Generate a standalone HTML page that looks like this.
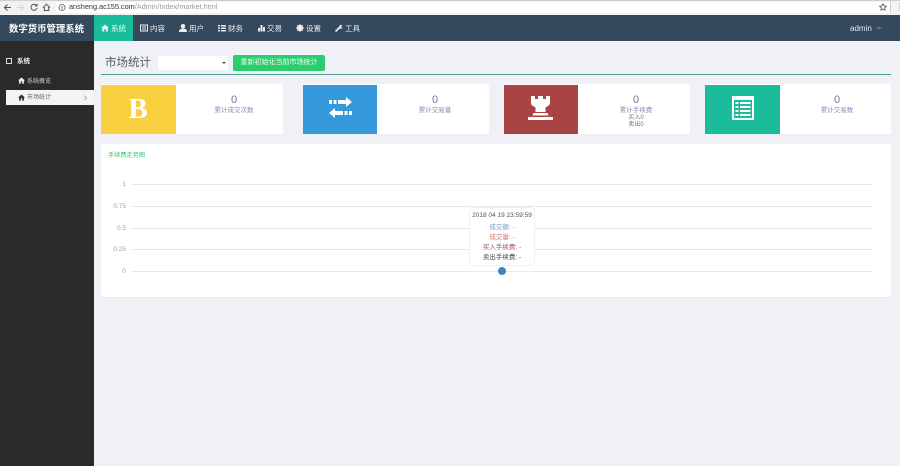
<!DOCTYPE html>
<html lang="zh-CN"><head><meta charset="utf-8"><title>市场统计</title>
<style>
*{box-sizing:border-box}
html,body{margin:0;padding:0;width:900px;height:466px;overflow:hidden;background:#eff1f6;font-family:"Liberation Sans","Noto Sans CJK SC",sans-serif}
body{filter:blur(.3px)}
.a{position:absolute;white-space:nowrap}
.bar{left:0;top:0;width:900px;height:15px;background:#f2f2f2;border-top:1px solid #cfcfcf}
.url{left:56px;top:2px;width:834px;height:11px;background:#fff}
.nav{left:0;top:15px;width:900px;height:26px;background:#35495d}
.side{left:0;top:41px;width:94px;height:425px;background:#2a2a2a}
.nt{top:15px;height:26px;line-height:27px;color:#fff;font-size:7.5px;opacity:.9}
.nt svg{vertical-align:-1px;margin-right:2px}
.card{top:84px;height:50px;background:#fff;border-radius:2px}
.ic{top:85px;height:49px}
.num{top:94px;width:110px;text-align:center;font-size:11px;color:#77779f;line-height:12px}
.lab{top:106px;width:110px;text-align:center;font-size:6.5px;color:#8a8ab8;line-height:10px}
.grid{left:131px;width:741px;height:1px;background:#e8e9ed}
.yl{left:100px;width:26px;text-align:right;font-size:6.5px;color:#a0a0a0;line-height:8px;margin-top:1px}
.tt{left:469px;width:66px;text-align:center;font-size:6.5px;line-height:8px}
</style></head><body>

<div class="a bar"></div>
<div class="a url"></div>
<svg class="a" style="left:0;top:0" width="68" height="15" viewBox="0 0 68 15">
<path d="M11 7.500H4.500M7.500 4.500l-3 3 3 3" fill="none" stroke="#555" stroke-width="1.100"/>
<path d="M17 7.500h6.500M20.500 4.500l3 3-3 3" fill="none" stroke="#d4d4d4" stroke-width="1.100"/>
<path d="M36.500 5.500a3 3 0 1 0 .5 2.500M37 3.800v2.200h-2.200" fill="none" stroke="#555" stroke-width="1"/>
<path d="M43 7.700l3.500-3.500 3.500 3.500M44.300 7v3.500h4.400V7" fill="none" stroke="#555" stroke-width="1"/>
<circle cx="62" cy="7.500" r="3" fill="none" stroke="#555" stroke-width=".8"/><path d="M62 6v3.300" stroke="#555" stroke-width=".8"/>
</svg>
<div class="a" style="left:69px;top:1px;font-size:7.3px;line-height:12px;color:#999"><span style="color:#333">ansheng.ac155.com</span>/Admin/Index/market.html</div>
<svg class="a" style="left:879px;top:3px" width="8" height="8" viewBox="0 0 8 8"><path d="M4 .7l1 2.200 2.400.3-1.800 1.600.5 2.400L4 6 1.900 7.200l.5-2.400L.6 3.200 3 2.900z" fill="none" stroke="#555" stroke-width=".8"/></svg>
<div class="a" style="left:890px;top:1px;width:1px;height:12px;background:#ccc"></div>
<div class="a" style="left:896px;top:1px;font-size:8px;line-height:12px;color:#555">⋮</div>

<div class="a nav"></div>
<div class="a" style="left:9px;top:15px;line-height:27px;font-size:9.4px;font-weight:bold;color:#fff">数字货币管理系统</div>
<div class="a" style="left:94px;top:15px;width:39px;height:26px;background:#1abc9c"></div>

<div class="a nt" style="left:101px"><svg width="8" height="8" viewBox="0 0 8 8"><path d="M4 .5 0 4h1.200v3.500h2V5h1.600v2.500h2V4H8z" fill="#fff"/></svg>系统</div>
<div class="a nt" style="left:140px"><svg width="8" height="8" viewBox="0 0 8 8"><path d="M.5 1h7v6h-7zM2 3h4M2 5h4" fill="none" stroke="#fff"/></svg>内容</div>
<div class="a nt" style="left:179px"><svg width="8" height="8" viewBox="0 0 8 8"><circle cx="4" cy="2.200" r="2.200" fill="#fff"/><path d="M0 8c0-3 2-3.500 4-3.500S8 5 8 8z" fill="#fff"/></svg>用户</div>
<div class="a nt" style="left:218px"><svg width="8" height="8" viewBox="0 0 8 8"><path d="M0 1h2v1.500H0zM3 1h5v1.500H3zM0 3.500h2V5H0zM3 3.500h5V5H3zM0 6h2v1.500H0zM3 6h5v1.500H3z" fill="#fff"/></svg>财务</div>
<div class="a nt" style="left:258px"><svg width="7" height="8" viewBox="0 0 7 8"><path d="M0 4h2v3.500H0zM2.500 1h2v6.500h-2zM5 3h2v4.500H5z" fill="#fff"/></svg>交易</div>
<div class="a nt" style="left:296px"><svg width="8" height="8" viewBox="0 0 8 8"><circle cx="4" cy="4" r="2.200" fill="none" stroke="#fff" stroke-width="1.800"/><path d="M4 0v8M0 4h8M1.200 1.200l5.600 5.600M6.800 1.200 1.200 6.800" stroke="#fff" stroke-width="1"/></svg>设置</div>
<div class="a nt" style="left:335px"><svg width="8" height="8" viewBox="0 0 8 8"><path d="M.5 7.500 4.500 3.500" stroke="#fff" stroke-width="1.800"/><path d="M4 3.500C4 1.500 5.500.500 7.500 1L6 2.500 6.500 3.500 7.500 3.800C7 5 5 5.200 4 3.500z" fill="#fff"/></svg>工具</div>
<div class="a" style="left:850px;top:15px;line-height:27px;font-size:8px;color:#e4e8ec">admin</div>
<div class="a" style="left:876px;top:27px;border:3px solid transparent;border-top:3px solid #5f7387"></div>

<div class="a side"></div>
<div class="a" style="left:6px;top:58px;width:6px;height:6px;border:1px solid #ddd"></div>
<div class="a" style="left:17px;top:57px;font-size:6.5px;line-height:10px;color:#eee;font-weight:bold">系统</div>
<svg class="a" style="left:18px;top:77px" width="7" height="7" viewBox="0 0 8 8"><path d="M4 .5 0 4h1.200v3.500h2V5h1.600v2.500h2V4H8z" fill="#eee"/></svg>
<div class="a" style="left:27px;top:76.500px;font-size:6px;line-height:10px;color:#ccc">系统概览</div>
<div class="a" style="left:6px;top:90px;width:88px;height:15px;background:#f4f4f6"></div>
<svg class="a" style="left:18px;top:94px" width="7" height="7" viewBox="0 0 8 8"><path d="M4 .5 0 4h1.200v3.500h2V5h1.600v2.500h2V4H8z" fill="#333"/></svg>
<div class="a" style="left:27px;top:92.500px;font-size:6px;line-height:10px;color:#666">市场统计</div>
<svg class="a" style="left:83px;top:95px" width="4" height="6" viewBox="0 0 4 6"><path d="M1 .5 3.500 3 1 5.500" fill="none" stroke="#aaa" stroke-width=".8"/></svg>

<div class="a" style="left:105px;top:54px;font-size:11.500px;line-height:18px;color:#555d66">市场统计</div>
<div class="a" style="left:158px;top:56px;width:70px;height:14px;background:#fff;border-radius:2px"></div>
<div class="a" style="left:222px;top:62px;border:2px solid transparent;border-top:2.500px solid #444"></div>
<div class="a" style="left:233px;top:55px;width:92px;height:16px;background:#2ecc71;border-radius:2px;color:#e8fff0;font-size:7px;line-height:16px;text-align:center">重新初始化当前市场统计</div>
<div class="a" style="left:101px;top:74px;width:790px;height:1px;background:#4f9d8e"></div>

<div class="a card" style="left:101px;width:182px"></div>
<div class="a card" style="left:303px;width:186px"></div>
<div class="a card" style="left:504px;width:186px"></div>
<div class="a card" style="left:705px;width:186px"></div>
<div class="a ic" style="left:101px;width:75px;background:#f8d040"></div>
<div class="a ic" style="left:303px;width:74px;background:#3498db"></div>
<div class="a ic" style="left:504px;width:74px;background:#a94442"></div>
<div class="a ic" style="left:705px;width:75px;background:#1abc9c"></div>

<div class="a" style="left:126px;top:92px;width:24px;text-align:center;font-family:'Liberation Serif',serif;font-weight:bold;font-size:29px;line-height:34px;color:#fff">B</div>
<svg class="a" style="left:329px;top:97px" width="24" height="21" viewBox="0 0 24 21"><path d="M0 3h3v4H0zM4.500 3h3v4h-3zM9 3h8V0l6 5-6 5V7H9z" fill="#fff"/><path d="M23 14h-3v4h3zM18.500 14h-3v4h3zM14 14H6v-3l-6 5 6 5v-3h8z" fill="#fff"/></svg>
<svg class="a" style="left:528px;top:96px" width="25" height="24" viewBox="0 0 25 24"><path d="M3 0h4v3h3V0h5v3h3V0h4v7c0 2.500-3 3.500-4.500 4.500V16H7.500v-4.500C6 10.500 3 9.500 3 7z" fill="#fff"/><path d="M5.500 17h14l1 2.500h-16z" fill="#fff"/><rect y="21" width="25" height="3" fill="#fff"/></svg>
<svg class="a" style="left:732px;top:96px" width="22" height="24" viewBox="0 0 22 24"><rect width="22" height="24" fill="#fff"/><rect x="2" y="4" width="18" height="18" fill="#1abc9c"/><path d="M3.500 6h3v2h-3zM8 6h10.500v2H8zM3.500 10h3v2h-3zM8 10h10.500v2H8zM3.500 14h3v2h-3zM8 14h10.500v2H8zM3.500 18h3v2h-3zM8 18h10.500v2H8z" fill="#fff"/></svg>

<div class="a num" style="left:179px">0</div><div class="a lab" style="left:179px">累计成交次数</div>
<div class="a num" style="left:380px">0</div><div class="a lab" style="left:380px">累计交易量</div>
<div class="a num" style="left:581px">0</div><div class="a lab" style="left:581px">累计手续费</div>
<div class="a" style="left:581px;top:115px;width:110px;text-align:center;font-size:6px;line-height:6.500px;color:#777">买入0<br>卖出0</div>
<div class="a num" style="left:782px">0</div><div class="a lab" style="left:782px">累计交易数</div>

<div class="a" style="left:101px;top:144px;width:790px;height:153px;background:#fff;border-radius:2px;box-shadow:0 1px 0 #e6e8ee"></div>
<div class="a" style="left:108px;top:151px;font-size:6.200px;line-height:10px;color:#2ecc71">手续费走势图</div>

<div class="a grid" style="top:184px"></div>
<div class="a grid" style="top:206px"></div>
<div class="a grid" style="top:228px"></div>
<div class="a grid" style="top:249px"></div>
<div class="a grid" style="top:271px"></div>
<div class="a yl" style="top:180px">1</div>
<div class="a yl" style="top:202px">0.75</div>
<div class="a yl" style="top:224px">0.5</div>
<div class="a yl" style="top:245px">0.25</div>
<div class="a yl" style="top:267px">0</div>

<div class="a" style="left:469px;top:207px;width:66px;height:59px;background:#fff;border:1px solid #eee;border-radius:5px"></div>
<div class="a tt" style="top:212px;color:#555;font-weight:normal">2018 04 19 23:59:59</div>
<div class="a tt" style="top:224px;color:#6a9fd0">成交额: -</div>
<div class="a tt" style="top:234px;color:#d9736a">成交量: -</div>
<div class="a tt" style="top:244px;color:#a05050">买入手续费: -</div>
<div class="a tt" style="top:254px;color:#444">卖出手续费: -</div>
<div class="a" style="left:498px;top:267px;width:8px;height:8px;border-radius:50%;background:#3f82c4"></div>
</body></html>
